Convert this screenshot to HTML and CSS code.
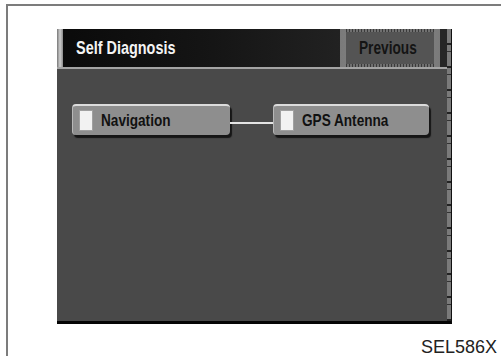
FILE: index.html
```html
<!DOCTYPE html>
<html lang="en">
<head>
    <meta charset="UTF-8">
    <meta name="viewport" content="width=device-width, initial-scale=1.0">
    <title>Self Diagnosis</title>
    <link rel="stylesheet" href="styles.css">
</head>
<body>
    <div class="frame">
        <div class="screen">
            <div class="screen-main">
                <div class="titlebar">
                    <div class="tab-edge"></div>
                    <h1 class="title"><span class="narrow">Self Diagnosis</span></h1>
                    <button class="prev"><span class="narrow">Previous</span></button>
                    <div class="bar-end"></div>
                </div>

                <!-- diagnosis chain -->
                <div class="diagram">
                    <div class="node node-nav"><span class="check"></span><span class="narrow">Navigation</span></div>
                    <div class="link"></div>
                    <div class="node node-gps"><span class="check"></span><span class="narrow">GPS Antenna</span></div>
                </div>
            </div>
            <div class="rail"></div>
        </div>
        <p class="code">SEL586X</p>
    </div>
</body>
</html>
```

FILE: styles.css
```css
body {
    margin: 0;
    background-color: #fff;
    font-family: "Liberation Sans", Arial, sans-serif;
}

/* the screen font is a condensed bold face */
.narrow {
    display: inline-block;
    white-space: nowrap;
    transform: scaleX(0.8);
    transform-origin: left center;
}

.frame {
    margin: 4px 0 0 6px;
    height: 352px;
    border-top: 2px solid #7c7c7c;
    border-left: 2px solid #7c7c7c;
    box-sizing: border-box;
}

.screen {
    display: flex;
    margin: 23px 0 0 49px;
    width: 395px;
    height: 295px;
    background-color: #494949;
    border-bottom: 3px solid #050505;
    border-right: 1px solid #111;
    box-sizing: border-box;
}

.screen-main {
    flex: 1;
}

.titlebar {
    display: flex;
    align-items: center;
    height: 38px;
    background: linear-gradient(to right, #0a0a0a 0%, #151515 40%, #2c2c2c 100%);
    border-bottom: 2px solid #a4a4a4;
}

.tab-edge {
    align-self: stretch;
    width: 6px;
    background: linear-gradient(to right, #777 0%, #cfcfcf 50%, #8a8a8a 100%);
}

.title {
    flex: 1;
    margin: 0 0 0 13px;
    color: #f4f4f4;
    font-size: 19px;
    font-weight: bold;
}

.title .narrow {
    transform: scaleX(0.76);
}

.prev {
    align-self: stretch;
    width: 100px;
    padding: 0 0 0 13px;
    text-align: left;
    border: none;
    border-left: 6px solid transparent;
    border-right: 6px solid transparent;
    border-image: linear-gradient(to right, #7a7a7a, #dadada, #7a7a7a) 1;
    background:
        repeating-linear-gradient(to right, #3a3a3a 0 1px, #707070 1px 3px) top / 100% 3px no-repeat,
        repeating-linear-gradient(to right, #3a3a3a 0 1px, #707070 1px 3px) bottom / 100% 3px no-repeat,
        #545454;
    color: #141414;
    font-family: "Liberation Sans", Arial, sans-serif;
    font-size: 18px;
    font-weight: bold;
}

.prev .narrow {
    transform: scaleX(0.76);
}

.bar-end {
    align-self: stretch;
    width: 7px;
    background-color: #262626;
}

.diagram {
    display: flex;
    align-items: flex-start;
    padding: 35px 0 0 15px;
}

.node {
    display: flex;
    align-items: center;
    gap: 8px;
    height: 31px;
    padding-left: 6px;
    box-sizing: border-box;
    background-color: #8e8e8e;
    border-top: 2px solid #dcdcdc;
    border-left: 1px solid #b8b8b8;
    border-radius: 4px;
    box-shadow: 2px 3px 1px #161616;
    color: #111;
    font-size: 17px;
    font-weight: bold;
}

.node-nav {
    width: 158px;
}

.node-gps {
    width: 156px;
}

.check {
    flex: none;
    width: 14px;
    height: 21px;
    background-color: #f2f2f2;
    box-shadow: inset 0 0 0 1px #a0a0a0;
}

.link {
    width: 43px;
    height: 2px;
    margin-top: 18px;
    background-color: #e4e4e4;
}

.rail {
    width: 4px;
    background: repeating-linear-gradient(to bottom, #7a7a7a 0 14px, #222 14px 16px, #7a7a7a 16px 22px, #333 22px 23px);
}

.code {
    margin: 14px 0 0;
    padding-right: 4px;
    text-align: right;
    font-size: 18px;
    line-height: 18px;
    color: #222;
}
```
